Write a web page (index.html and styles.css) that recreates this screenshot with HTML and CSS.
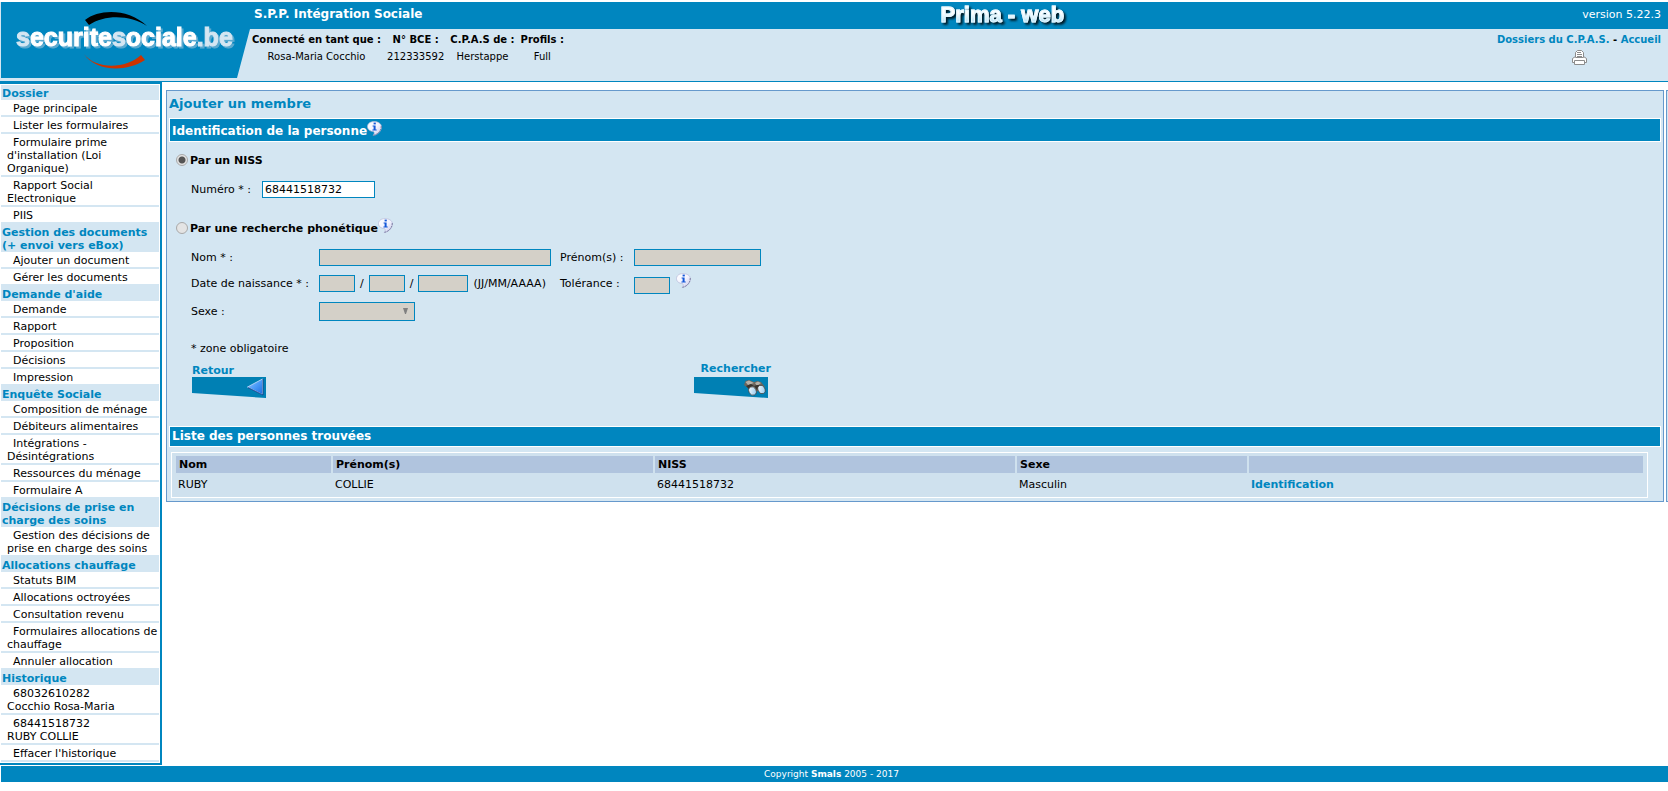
FILE: index.html
```html
<!DOCTYPE html>
<html lang="fr">
<head>
<meta charset="utf-8">
<title>Prima - web</title>
<link rel="stylesheet" href="styles.css">
</head>
<body>
<svg class="defs" width="0" height="0" aria-hidden="true">
  <defs>
    <linearGradient id="bubble" x1="0" y1="0" x2="1" y2="1">
      <stop offset="0" stop-color="#ffffff"/>
      <stop offset="0.5" stop-color="#f4f4ff"/>
      <stop offset="1" stop-color="#c4c4e6"/>
    </linearGradient>
    <linearGradient id="arrow" x1="0" y1="0" x2="1" y2="1">
      <stop offset="0" stop-color="#9cc8ff"/>
      <stop offset="0.5" stop-color="#4c9cf8"/>
      <stop offset="1" stop-color="#1c6ce0"/>
    </linearGradient>
    <linearGradient id="lens" x1="0" y1="0" x2="1" y2="1">
      <stop offset="0" stop-color="#ffffff"/>
      <stop offset="1" stop-color="#8cc4ec"/>
    </linearGradient>
    <symbol id="info" viewBox="0 0 15 15">
      <path d="M7 0.6C3 0.6 0.5 2.8 0.5 5.6S3 10.4 6.6 10.6C7.6 11.8 7.4 13 6.2 14.4C10 14 14.4 10.8 14.4 5.8C14.4 2.6 11 0.6 7 0.6Z" fill="url(#bubble)" stroke="#b4b8d8" stroke-width="0.7"/>
      <path d="M14.3 5C14.4 9.6 11 13.4 6.4 14.4" fill="none" stroke="#77779c" stroke-width="0.9" stroke-dasharray="2 0.8"/>
      <rect x="6.6" y="1.6" width="2.2" height="1.8" fill="#1458d8"/>
      <path d="M5.6 4.4h3v4h1.1v1.1H5.4V8.4h1.2V5.5h-1z" fill="#1458d8"/>
    </symbol>
  </defs>
</svg>

<header class="header">
  <svg class="logo" width="250" height="76" viewBox="0 0 250 76" role="img" aria-label="securitesociale.be">
    <path class="logo-bg" d="M0 0H250V27H249L236 76H0Z"/>
    <path d="M84 18C98 7 127 6 146 24C130 13 104 12 88 23Z" fill="#000"/>
    <path d="M83 52C94 67 124 68 140 53L144 58C124 71 94 69 83 52Z" fill="#cc3300"/>
    <text class="logo-text" x="15" y="44"><tspan class="logo-soft">s</tspan>ecurite<tspan class="logo-soft">s</tspan>ociale<tspan class="logo-soft">.be</tspan></text>
  </svg>
  <div class="header-body">
    <div class="topbar">
      <strong class="org">S.P.P. Intégration Sociale</strong>
      <span class="app-name">Prima - web</span>
      <span class="version">version 5.22.3</span>
    </div>
    <div class="session">
      <table class="session-info">
        <tr><th>Connecté en tant que :</th><th>N° BCE :</th><th>C.P.A.S de :</th><th>Profils :</th></tr>
        <tr><td>Rosa-Maria Cocchio</td><td>212333592</td><td>Herstappe</td><td>Full</td></tr>
      </table>
      <div class="session-links">
        <div><a href="#">Dossiers du C.P.A.S.</a> - <a href="#">Accueil</a></div>
        <a href="#" class="print" aria-label="Imprimer">
          <svg width="15" height="15" viewBox="0 0 15 15" fill="#fff" stroke="#8c8c8c">
            <path d="M0.5 12.5V8.5L3.5 6.5H11.5L14.5 8.5V12.5Z"/>
            <path d="M3.5 7.5V2.5L5.5 0.5H9.5L11.5 2.5V7.5Z"/>
            <path d="M5 2.5H9M5 4.5H10M5 6.5H10"/>
            <path d="M2.5 14.5V10.5H12.5V14.5Z"/>
          </svg>
        </a>
      </div>
    </div>
  </div>
</header>

<div class="page">
  <nav class="sidebar">
    <h2>Dossier</h2>
    <a href="#">Page principale</a>
    <a href="#">Lister les formulaires</a>
    <a href="#">Formulaire prime d'installation (Loi Organique)</a>
    <a href="#">Rapport Social Electronique</a>
    <a href="#">PIIS</a>
    <h2>Gestion des documents (+ envoi vers eBox)</h2>
    <a href="#">Ajouter un document</a>
    <a href="#">Gérer les documents</a>
    <h2>Demande d'aide</h2>
    <a href="#">Demande</a>
    <a href="#">Rapport</a>
    <a href="#">Proposition</a>
    <a href="#">Décisions</a>
    <a href="#">Impression</a>
    <h2>Enquête Sociale</h2>
    <a href="#">Composition de ménage</a>
    <a href="#">Débiteurs alimentaires</a>
    <a href="#">Intégrations - Désintégrations</a>
    <a href="#">Ressources du ménage</a>
    <a href="#">Formulaire A</a>
    <h2>Décisions de prise en charge des soins</h2>
    <a href="#">Gestion des décisions de prise en charge des soins</a>
    <h2>Allocations chauffage</h2>
    <a href="#">Statuts BIM</a>
    <a href="#">Allocations octroyées</a>
    <a href="#">Consultation revenu</a>
    <a href="#">Formulaires allocations de chauffage</a>
    <a href="#">Annuler allocation</a>
    <h2>Historique</h2>
    <a href="#">68032610282<br>Cocchio Rosa-Maria</a>
    <a href="#">68441518732<br>RUBY COLLIE</a>
    <a href="#">Effacer l'historique</a>
  </nav>

  <main class="content">
    <section class="panel">
      <h1>Ajouter un membre</h1>
      <h2 class="bar bar-tall">Identification de la personne<svg class="info"><use href="#info"/></svg></h2>
      <form class="form">
        <div class="choice">
          <input type="radio" name="mode" id="mode-niss" checked>
          <label for="mode-niss">Par un NISS</label>
        </div>
        <div class="niss">
          <label for="niss">Numéro * :</label>
          <input class="box" type="text" id="niss" value="68441518732">
        </div>
        <div class="choice choice-second">
          <input type="radio" name="mode" id="mode-phon">
          <label for="mode-phon">Par une recherche phonétique</label><svg class="info"><use href="#info"/></svg>
        </div>
        <div class="fields">
          <label for="nom">Nom * :</label>
          <input class="box box-name" type="text" id="nom" disabled>
          <label for="prenom">Prénom(s) :</label>
          <input class="box box-first" type="text" id="prenom" disabled>

          <label for="jour">Date de naissance * :</label>
          <div class="date">
            <input class="box box-short" type="text" id="jour" aria-label="Jour" disabled><span>/</span>
            <input class="box box-short" type="text" aria-label="Mois" disabled><span>/</span>
            <input class="box box-year" type="text" aria-label="Année" disabled>
            <span>(JJ/MM/AAAA)</span>
          </div>
          <label for="tolerance">Tolérance :</label>
          <div class="tolerance">
            <input class="box box-short" type="text" id="tolerance" disabled>
            <svg class="info"><use href="#info"/></svg>
          </div>

          <label for="sexe">Sexe :</label>
          <div class="select">
            <select id="sexe" disabled><option></option></select>
            <svg width="7" height="6" viewBox="0 0 7 6"><path d="M1 0H6L4 6H3Z" fill="#808080"/></svg>
          </div>
        </div>
        <p class="note">* zone obligatoire</p>
        <div class="actions">
          <button type="button">Retour
            <svg width="74" height="21" viewBox="0 0 74 21">
              <path d="M0 0H74V21L0 16Z" fill="#0080b4"/>
              <path d="M55.5 10L70.5 2V17.5Z" fill="url(#arrow)" stroke="#c8e0fc" stroke-width="0.8"/>
              <path d="M71 2V18L56 10.6" fill="none" stroke="#143c8c" stroke-width="0.9"/>
            </svg>
          </button>
          <button type="button" class="search"><span>Rechercher</span>
            <svg width="74" height="21" viewBox="0 0 74 21">
              <path d="M0 0H74V21L0 16Z" fill="#0080b4"/>
              <path d="M50 8L51.5 4L55 3L60 5L63 4L67 5L71 10L68 13L60 15L54 11Z" fill="#6c665e"/>
              <path d="M51.5 5L55 3.5L60 6L54 8ZM61 6L64 4.5L67 6L63 9Z" fill="#b4b0a8"/>
              <path d="M52 9L55 12L60 9L57 7ZM60 9L63 13L66 8L63 8Z" fill="#38342f"/>
              <ellipse cx="58.5" cy="14" rx="3.6" ry="4.4" fill="url(#lens)" stroke="#44403c" stroke-width="0.7" transform="rotate(-25 58.5 14)"/>
              <ellipse cx="67.5" cy="12.5" rx="3.4" ry="4.4" fill="url(#lens)" stroke="#44403c" stroke-width="0.7" transform="rotate(-25 67.5 12.5)"/>
            </svg>
          </button>
        </div>
      </form>
      <h2 class="bar">Liste des personnes trouvées</h2>
      <table class="results">
        <colgroup><col class="c-nom"><col class="c-prenom"><col class="c-niss"><col class="c-sexe"><col></colgroup>
        <thead><tr><th>Nom</th><th>Prénom(s)</th><th>NISS</th><th>Sexe</th><th></th></tr></thead>
        <tbody><tr><td>RUBY</td><td>COLLIE</td><td>68441518732</td><td>Masculin</td><td><a href="#">Identification</a></td></tr></tbody>
      </table>
    </section>
    <aside class="panel-edge"></aside>
  </main>
</div>

<footer class="footer">Copyright <strong>Smals</strong> 2005 - 2017</footer>
</body>
</html>
```
FILE: styles.css
```css
:root {
  --blue: #0086bf;
  --light: #d4e6f2;
  --line: #6699cc;
}

* { box-sizing: border-box; }

body {
  margin: 0;
  padding-top: 2px;
  background: #fff;
  color: #000;
  font: 11px/13px Verdana, "DejaVu Sans", sans-serif;
}

h1, h2, p { margin: 0; }
a { color: var(--blue); font-weight: bold; text-decoration: none; }
.defs { position: absolute; }

/* Header */
.header {
  display: flex;
  align-items: flex-start;
  height: 80px;
  border-left: 1px solid var(--light);
  border-bottom: 1px solid var(--blue);
  background: var(--light);
}
.logo { flex: none; display: block; }
.logo-bg { fill: var(--blue); }
.logo-text {
  font: bold 25px "Liberation Sans", Arial, sans-serif;
  stroke-width: 1px;
  fill: #fff;
  stroke: #fff;
  filter: drop-shadow(2px 2px 0 #5aa9cf);
}
.logo-soft { fill: var(--light); stroke: var(--light); }
.header-body { flex: 1; }
.topbar {
  display: flex;
  justify-content: space-between;
  align-items: center;
  height: 27px;
  padding: 0 7px 2px 3px;
  background: var(--blue);
  color: #fff;
}
.org { font-size: 12px; }
.app-name {
  font: bold 22px/25px "Liberation Sans", Arial, sans-serif;
  background: linear-gradient(#fff 45%, #b4e4f8 80%);
  background-clip: text;
  color: transparent;
  -webkit-text-stroke: 1px #e4f6ff;
  filter: drop-shadow(2px 2px 1px rgba(0, 0, 0, 0.8));
}
.session {
  display: flex;
  justify-content: space-between;
  align-items: flex-start;
  padding: 4px 7px 0 0;
  font-size: 10px;
}
.session-info { border-spacing: 0; text-align: center; white-space: nowrap; }
.session-info th, .session-info td { padding: 0 5px 4px 1px; line-height: 13px; }
.session-links { text-align: center; font-weight: bold; }
.print { display: block; height: 15px; margin-top: 4px; padding-left: 1px; }

/* Sidebar */
.page { display: flex; align-items: flex-start; }
.sidebar {
  flex: none;
  width: 162px;
  margin-top: -1px;
  padding: 1px;
  border: solid var(--blue);
  border-width: 3px 2px 2px 0;
}
.sidebar h2 {
  padding: 2px 1px 0;
  background: var(--light);
  color: var(--blue);
  font-size: 11px;
}
.sidebar a {
  display: block;
  padding: 2px 0 0 6px;
  border-bottom: 2px solid var(--light);
  color: #000;
  font-weight: normal;
  text-indent: 6px;
}

/* Content */
.content {
  flex: 1;
  display: flex;
  gap: 2px;
  margin: 8px 0 0 4px;
}
.panel {
  flex: 1;
  padding: 0 2px 3px;
  border: 1px solid var(--line);
  background: var(--light);
}
.panel-edge {
  width: 2px;
  border: 1px solid var(--line);
  border-right: 0;
  background: var(--light);
}
.panel h1 {
  padding: 5px 0 6px;
  color: var(--blue);
  font-size: 13px;
  line-height: 16px;
}
.bar {
  display: flex;
  align-items: center;
  height: 21px;
  padding-left: 2px;
  border: 1px solid #fff;
  background: var(--blue);
  color: #fff;
  font-size: 12px;
}
.bar-tall { height: 24px; padding-top: 3px; }
.info { flex: none; width: 15px; height: 15px; margin-bottom: 6px; }

/* Form */
.form { padding: 9px 7px 28px; }
.choice { display: flex; align-items: center; height: 18px; font-weight: bold; }
.choice-second { margin-top: 21px; }
.choice input {
  appearance: none;
  width: 12px;
  height: 12px;
  margin: 0 2px 0 0;
  border: 1px solid #a9a9a9;
  border-radius: 50%;
  background: #e4e4e4;
}
.choice input:checked { background: radial-gradient(circle, #555 0 3px, #e4e4e4 4px); }
.niss {
  display: flex;
  align-items: center;
  gap: 11px;
  margin-top: 12px;
  padding-left: 15px;
}
.box, .select select {
  height: 17px;
  margin: 0;
  padding: 0 2px;
  border: 1px solid var(--blue);
  border-radius: 0;
  background: #fff;
  color: #000;
  font: inherit;
}
.box:disabled, .select select:disabled { background: #d4d0c8; opacity: 1; }
.niss .box { width: 113px; }
.fields {
  display: grid;
  grid-template-columns: 128px 241px 74px auto;
  grid-template-rows: 17px 19px 21px;
  row-gap: 8px;
  align-items: center;
  margin-top: 12px;
  padding-left: 15px;
}
.box-name { width: 232px; }
.box-first { width: 127px; }
.box-short { width: 36px; }
.box-year { width: 50px; }
.date, .tolerance { display: flex; align-items: center; gap: 5px; white-space: nowrap; }
.tolerance { align-items: flex-end; gap: 6px; }
.select { position: relative; width: 96px; height: 19px; }
.select select { display: block; appearance: none; width: 96px; height: 19px; }
.select svg { position: absolute; right: 6px; top: 6px; }
.note { margin-top: 20px; padding-left: 15px; }
.actions {
  display: flex;
  justify-content: space-between;
  align-items: flex-end;
  width: 595px;
  margin-top: 7px;
  padding-left: 16px;
}
.actions button {
  padding: 0;
  border: 0;
  background: none;
  color: var(--blue);
  font: inherit;
  font-weight: bold;
  text-align: left;
  cursor: pointer;
}
.actions button svg { display: block; }
.search span { display: block; padding: 0 0 2px 7px; }

/* Results */
.results {
  table-layout: fixed;
  width: calc(100% - 15px);
  margin: 5px 0 0 2px;
  padding: 2px;
  border: 1px solid #fff;
  border-spacing: 2px 1px;
  background: #cfe1ee;
  text-align: left;
}
.results th { height: 17px; padding: 1px 3px; background: #b0c4de; }
.results td { height: 20px; padding: 1px 2px; }
.c-nom { width: 155px; }
.c-prenom { width: 320px; }
.c-niss { width: 360px; }
.c-sexe { width: 230px; }

/* Footer */
.footer {
  height: 16px;
  margin: 1px 0 0 1px;
  padding-right: 6px;
  background: var(--blue);
  color: #fff;
  font-size: 9px;
  line-height: 16px;
  text-align: center;
}
```
